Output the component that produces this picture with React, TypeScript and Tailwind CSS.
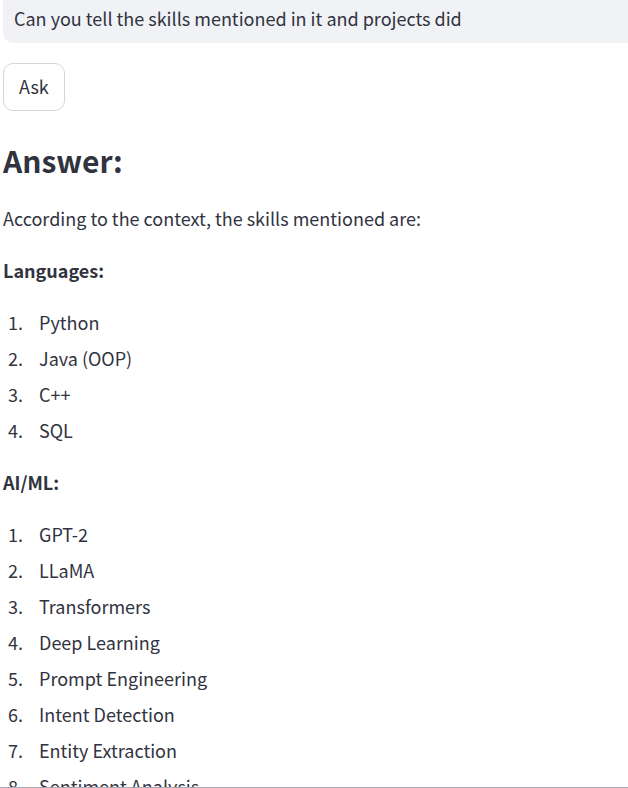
const languages = ["Python", "Java (OOP)", "C++", "SQL"];

const aiTopics = [
  "GPT-2",
  "LLaMA",
  "Transformers",
  "Deep Learning",
  "Prompt Engineering",
  "Intent Detection",
  "Entity Extraction",
  "Sentiment Analysis",
];

function SkillList({ items }: { items: string[] }) {
  return (
    <ol className="flex flex-col gap-1">
      {items.map((item, index) => (
        <li key={item} className="flex gap-4">
          <span className="w-5 text-right">{index + 1}.</span>
          <span>{item}</span>
        </li>
      ))}
    </ol>
  );
}

export default function App() {
  return (
    <main className="h-screen overflow-hidden border-b border-[#aaa8b2] bg-white pl-[3px] font-['Noto_Sans_CJK_SC','Noto_Sans',sans-serif] text-[18px] leading-8 text-[#31333f]">
      <form onSubmit={(event) => event.preventDefault()}>
        <input
          type="text"
          aria-label="Ask a question"
          defaultValue="Can you tell the skills mentioned in it and projects did"
          className="block h-[43px] w-full rounded-bl-[10px] bg-[#f0f2f6] px-[11px] pb-2 outline-none"
        />
        <button
          type="submit"
          className="mt-5 block h-12 rounded-[10px] border border-[#d6d6d9] bg-white px-[15px] pb-[2px]"
        >
          Ask
        </button>
      </form>
      <section className="flex flex-col gap-5 pt-[27px]">
        <h2 className="text-[30px] leading-[44px] font-bold">Answer:</h2>
        <p>According to the context, the skills mentioned are:</p>
        <h3 className="font-bold">Languages:</h3>
        <SkillList items={languages} />
        <h3 className="font-bold">AI/ML:</h3>
        <SkillList items={aiTopics} />
      </section>
    </main>
  );
}
